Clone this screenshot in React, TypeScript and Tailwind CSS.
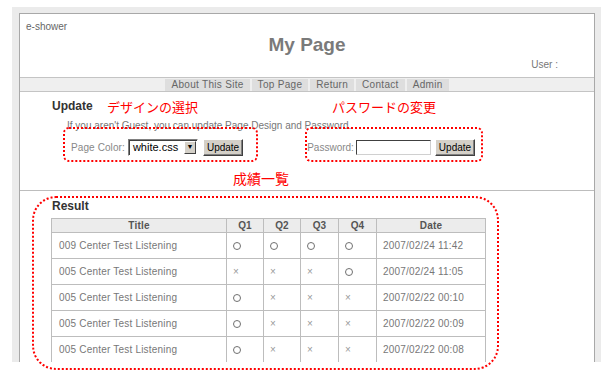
const rows = [
  { title: '009 Center Test Listening', q: ['o', 'o', 'o', 'o'], date: '2007/02/24 11:42' },
  { title: '005 Center Test Listening', q: ['x', 'x', 'x', 'o'], date: '2007/02/24 11:05' },
  { title: '005 Center Test Listening', q: ['o', 'x', 'x', 'x'], date: '2007/02/22 00:10' },
  { title: '005 Center Test Listening', q: ['o', 'x', 'x', 'x'], date: '2007/02/22 00:09' },
  { title: '005 Center Test Listening', q: ['o', 'x', 'x', 'x'], date: '2007/02/22 00:08' },
]

const navItems = ['About This Site', 'Top Page', 'Return', 'Contact', 'Admin']

function Mark({ v }: { v: string }) {
  if (v === 'o') {
    return <span className="inline-block h-[8px] w-[8px] rounded-full border border-[#707070] align-middle" />
  }
  return <span className="text-[10px] leading-none text-[#999]">×</span>
}

function WinButton() {
  return (
    <button className="h-[17px] border border-t-white border-l-white border-r-[#404040] border-b-[#404040] bg-[#d4d0c8] px-[3px] text-[10px] leading-none text-black shadow-[inset_-1px_-1px_0_#808080]">
      Update
    </button>
  )
}

export default function App() {
  return (
    <div className="relative h-[372px] w-[616px] overflow-hidden bg-white pl-[12px] pt-[7px] font-['Liberation_Sans',sans-serif]">
      <div className="h-[355px] w-[589px] bg-[#ebebeb] pl-[7px] pr-[6px] pt-[6px]">
        <div className="h-full overflow-hidden border border-b-0 border-[#a8a8a8] bg-white">
          {/* header */}
          <div className="flex h-[63px] flex-col">
            <div className="pl-[6px] pt-[7px] text-[10px] leading-[12px] text-[#666]">e-shower</div>
            <div className="mt-[1px] text-center text-[19px] font-bold leading-[22px] text-[#7a7a7a]">My Page</div>
            <div className="mt-[3px] pr-[36px] text-right text-[10px] leading-[12px] text-[#777]">User :</div>
          </div>

          {/* nav */}
          <div className="flex h-[15px] items-center justify-center gap-[2px] border-y border-[#c4c4c4] bg-[#efefef]">
            {navItems.map((n) => (
              <span key={n} className="h-[12px] bg-[#dedede] px-[6px] text-[10px] leading-[12px] tracking-[0.3px] text-[#666]">
                {n}
              </span>
            ))}
          </div>

          {/* update */}
          <div className="h-[99px] border-b border-[#bdbdbd] pt-[7px]">
            <div className="pl-[32px] text-[12px] font-bold leading-[14px] text-[#333]">Update</div>
            <div className="mt-[7px] pl-[47px] text-[10px] leading-[12px] text-[#777]">
              If you aren't Guest, you can update Page Design and Password.
            </div>
            <div className="mt-[7px] flex items-center pl-[51px] text-[10px] text-[#888]">
              <span className="mr-[3px] tracking-[0.1px]">Page Color:</span>
              <div className="flex h-[17px] w-[70px] items-center border border-t-[#808080] border-l-[#808080] border-r-white border-b-white bg-white shadow-[inset_1px_1px_0_#404040]">
                <span className="flex-1 pl-[4px] text-[11px] leading-none text-black">white.css</span>
                <span className="mr-[1px] flex h-[13px] w-[12px] items-center justify-center border border-t-white border-l-white border-r-[#404040] border-b-[#404040] bg-[#d4d0c8] text-[7px] text-black">
                  ▼
                </span>
              </div>
              <div className="ml-[5px]">
                <WinButton />
              </div>

              <span className="ml-[64px] mr-[2px]">Password:</span>
              <div className="h-[15px] w-[75px] border border-t-[#404040] border-l-[#404040] border-r-[#d0d0d0] border-b-[#d0d0d0] bg-white" />
              <div className="ml-[4px]">
                <WinButton />
              </div>
            </div>
          </div>

          {/* result */}
          <div className="pt-[8px]">
            <div className="pl-[32px] text-[12px] font-bold leading-[14px] text-[#333]">Result</div>
            <table className="ml-[31px] mt-[5px] w-[434px] table-fixed border-collapse text-[10px] tracking-[0.2px] text-[#777]">
              <colgroup>
                <col className="w-[175px]" />
                <col className="w-[37px]" />
                <col className="w-[37px]" />
                <col className="w-[38px]" />
                <col className="w-[38px]" />
                <col className="w-[109px]" />
              </colgroup>
              <thead>
                <tr className="h-[14px] bg-[#ececec]">
                  {['Title', 'Q1', 'Q2', 'Q3', 'Q4', 'Date'].map((h) => (
                    <th key={h} className="border border-[#bdbdbd] p-0 text-center font-bold leading-[12px] text-[#555]">
                      {h}
                    </th>
                  ))}
                </tr>
              </thead>
              <tbody>
                {rows.map((r, i) => (
                  <tr key={i} className="h-[26px]">
                    <td className="border border-[#bdbdbd] pl-[7px]">{r.title}</td>
                    {r.q.map((v, j) => (
                      <td key={j} className="border border-[#bdbdbd] pl-[6px]">
                        <Mark v={v} />
                      </td>
                    ))}
                    <td className="border border-[#bdbdbd] pl-[6px]">{r.date}</td>
                  </tr>
                ))}
              </tbody>
            </table>
          </div>
        </div>
      </div>

      {/* red annotations over the screenshot */}
      <div className="absolute left-[107px] top-[99px] font-['Noto_Sans_CJK_JP',sans-serif] text-[13px] leading-[15px] text-[#f00]">
        デザインの選択
      </div>
      <div className="absolute left-[332px] top-[99px] font-['Noto_Sans_CJK_JP',sans-serif] text-[13px] leading-[15px] text-[#f00]">
        パスワードの変更
      </div>
      <div className="absolute left-[233px] top-[170px] font-['Noto_Sans_CJK_JP',sans-serif] text-[14px] leading-[16px] text-[#f00]">
        成績一覧
      </div>
      <div className="absolute left-[63px] top-[127px] h-[35px] w-[195px] rounded-[6px] border-2 border-dotted border-[#f00]" />
      <div className="absolute left-[305px] top-[127px] h-[35px] w-[178px] rounded-[6px] border-2 border-dotted border-[#f00]" />
      <div className="absolute left-[32px] top-[196px] h-[174px] w-[467px] rounded-[24px] border-2 border-dotted border-[#f00]" />
    </div>
  )
}
